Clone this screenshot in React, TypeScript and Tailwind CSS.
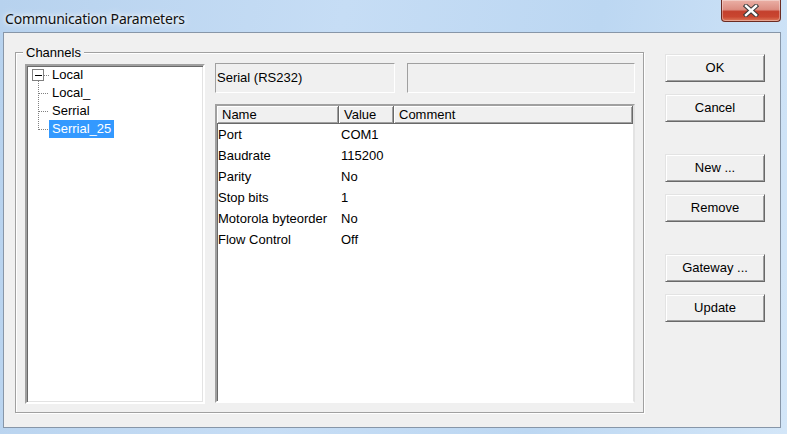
import React from "react";

const rows = [
  ["Port", "COM1"],
  ["Baudrate", "115200"],
  ["Parity", "No"],
  ["Stop bits", "1"],
  ["Motorola byteorder", "No"],
  ["Flow Control", "Off"],
];

const treeItems = ["Local", "Local_", "Serrial", "Serrial_25"];

function Btn({ label, className = "" }: { label: string; className?: string }) {
  return (
    <button
      className={`w-[100px] h-[28px] bg-[#f0f0f0] border border-t-[#e3e3e3] border-l-[#e3e3e3] border-b-[#696969] border-r-[#696969] shadow-[inset_1px_1px_0_#fff,inset_-1px_-1px_0_#a0a0a0] text-[13px] text-black ${className}`}
    >
      {label}
    </button>
  );
}

function Tree() {
  return (
    <div className="relative w-[180px] h-[340px] mt-[11px] bg-white border-2 border-t-[#a0a0a0] border-l-[#a0a0a0] border-b-[#fff] border-r-[#fff] shadow-[inset_1px_1px_0_#696969,inset_-1px_-1px_0_#e3e3e3]">
      <svg className="absolute left-0 top-0" width="60" height="80" shapeRendering="crispEdges">
        <rect x="5.5" y="3.5" width="11" height="11" fill="#fff" stroke="#7f7f7f" />
        <line x1="8" y1="9" x2="15" y2="9" stroke="#000" />
        <line x1="17" y1="9.5" x2="22" y2="9.5" stroke="#808080" strokeDasharray="1 1" />
        <line x1="11.5" y1="15" x2="11.5" y2="64" stroke="#808080" strokeDasharray="1 1" />
        <line x1="12" y1="27.5" x2="22" y2="27.5" stroke="#808080" strokeDasharray="1 1" />
        <line x1="12" y1="45.5" x2="22" y2="45.5" stroke="#808080" strokeDasharray="1 1" />
        <line x1="12" y1="63.5" x2="22" y2="63.5" stroke="#808080" strokeDasharray="1 1" />
      </svg>
      <div className="flex flex-col pl-[22px]">
        {treeItems.map((t, i) => (
          <div key={t} className="h-[18px] flex items-center">
            <span
              className={`h-[18px] px-[3px] flex items-center text-[13px] ${
                i === 3 ? "bg-[#3399ff] text-white" : "text-black"
              }`}
            >
              {t}
            </span>
          </div>
        ))}
      </div>
    </div>
  );
}

function HeaderCell({ label, className = "" }: { label: string; className?: string }) {
  return (
    <div
      className={`h-[18px] flex items-center pl-[5px] border-r border-b border-r-[#696969] border-b-[#696969] shadow-[inset_1px_1px_0_#fff,inset_-1px_-1px_0_#a0a0a0] bg-[#f0f0f0] text-[13px] ${className}`}
    >
      {label}
    </div>
  );
}

function ListView() {
  return (
    <div className="w-[420px] h-[299px] mt-[11px] bg-white border-2 border-t-[#a0a0a0] border-l-[#a0a0a0] border-b-[#fff] border-r-[#e3e3e3] shadow-[inset_1px_1px_0_#696969]">
      <div className="flex">
        <HeaderCell label="Name" className="w-[122px]" />
        <HeaderCell label="Value" className="w-[55px]" />
        <HeaderCell label="Comment" className="flex-1" />
      </div>
      {rows.map(([n, v]) => (
        <div key={n} className="h-[21px] flex items-center text-[13px] text-black">
          <span className="w-[122px] pl-[1px]">{n}</span>
          <span className="pl-[2px]">{v}</span>
        </div>
      ))}
    </div>
  );
}

export default function App() {
  return (
    <div
      className="w-[787px] h-[434px] overflow-hidden flex flex-col bg-[linear-gradient(100deg,#b7d2ee_0%,#c6ddf5_40%,#bcd7f2_70%,#d3e6f8_100%)]"
      style={{ fontFamily: '"Liberation Sans", Arial, sans-serif' }}
    >
      {/* title bar */}
      <div className="h-[32px] flex items-start justify-between">
        <span
          className="ml-[5px] mt-[8px] text-[14px] tracking-[-0.2px] text-[#111] [text-shadow:0_0_8px_#fff,0_0_4px_#fff]"
          style={{ fontFamily: '"Noto Sans", "Open Sans", sans-serif' }}
        >
          Communication Parameters
        </span>
        <div className="mr-[6px] w-[60px] h-[22px] rounded-b-[4px] border border-t-0 border-[#6b2b22] flex items-center justify-center bg-[linear-gradient(#eab0a6_0%,#dc8e82_45%,#c4402d_55%,#c94630_80%,#dd7a5c_100%)] shadow-[inset_0_0_0_1px_rgba(255,255,255,0.35)]">
          <svg width="18" height="13" viewBox="0 0 18 13">
            <path d="M4 2 L14 11 M14 2 L4 11" stroke="#3a3a3a" strokeWidth="4.4" strokeLinecap="square" />
            <path d="M4 2 L14 11 M14 2 L4 11" stroke="#fff" strokeWidth="2.4" strokeLinecap="square" />
          </svg>
        </div>
      </div>

      {/* client area */}
      <div className="ml-[3px] w-[778px] h-[396px] bg-[#f0f0f0] border border-[#8796a8] flex items-start pl-[11px]">
        <div className="relative mt-[19px] w-[629px] h-[361px] border border-[#a0a0a0] shadow-[inset_1px_1px_0_#fff,1px_1px_0_#fff] flex items-start pl-[9px]">
          <span className="absolute left-[7px] -top-[8px] px-[3px] bg-[#f0f0f0] text-[13px] leading-[15px] text-black">
            Channels
          </span>
          <Tree />
          <div className="ml-[10px] pt-[10px] flex flex-col">
            <div className="flex gap-[12px]">
              <div className="w-[180px] h-[30px] flex items-center pl-[1px] border border-t-[#a0a0a0] border-l-[#a0a0a0] border-b-white border-r-white text-[13px] text-black">
                Serial (RS232)
              </div>
              <div className="w-[228px] h-[30px] border border-t-[#a0a0a0] border-l-[#a0a0a0] border-b-white border-r-white" />
            </div>
            <ListView />
          </div>
        </div>

        <div className="ml-[21px] mt-[21px] flex flex-col">
          <Btn label="OK" />
          <Btn label="Cancel" className="mt-[12px]" />
          <Btn label="New ..." className="mt-[32px]" />
          <Btn label="Remove" className="mt-[12px]" />
          <Btn label="Gateway ..." className="mt-[32px]" />
          <Btn label="Update" className="mt-[12px]" />
        </div>
      </div>
    </div>
  );
}
